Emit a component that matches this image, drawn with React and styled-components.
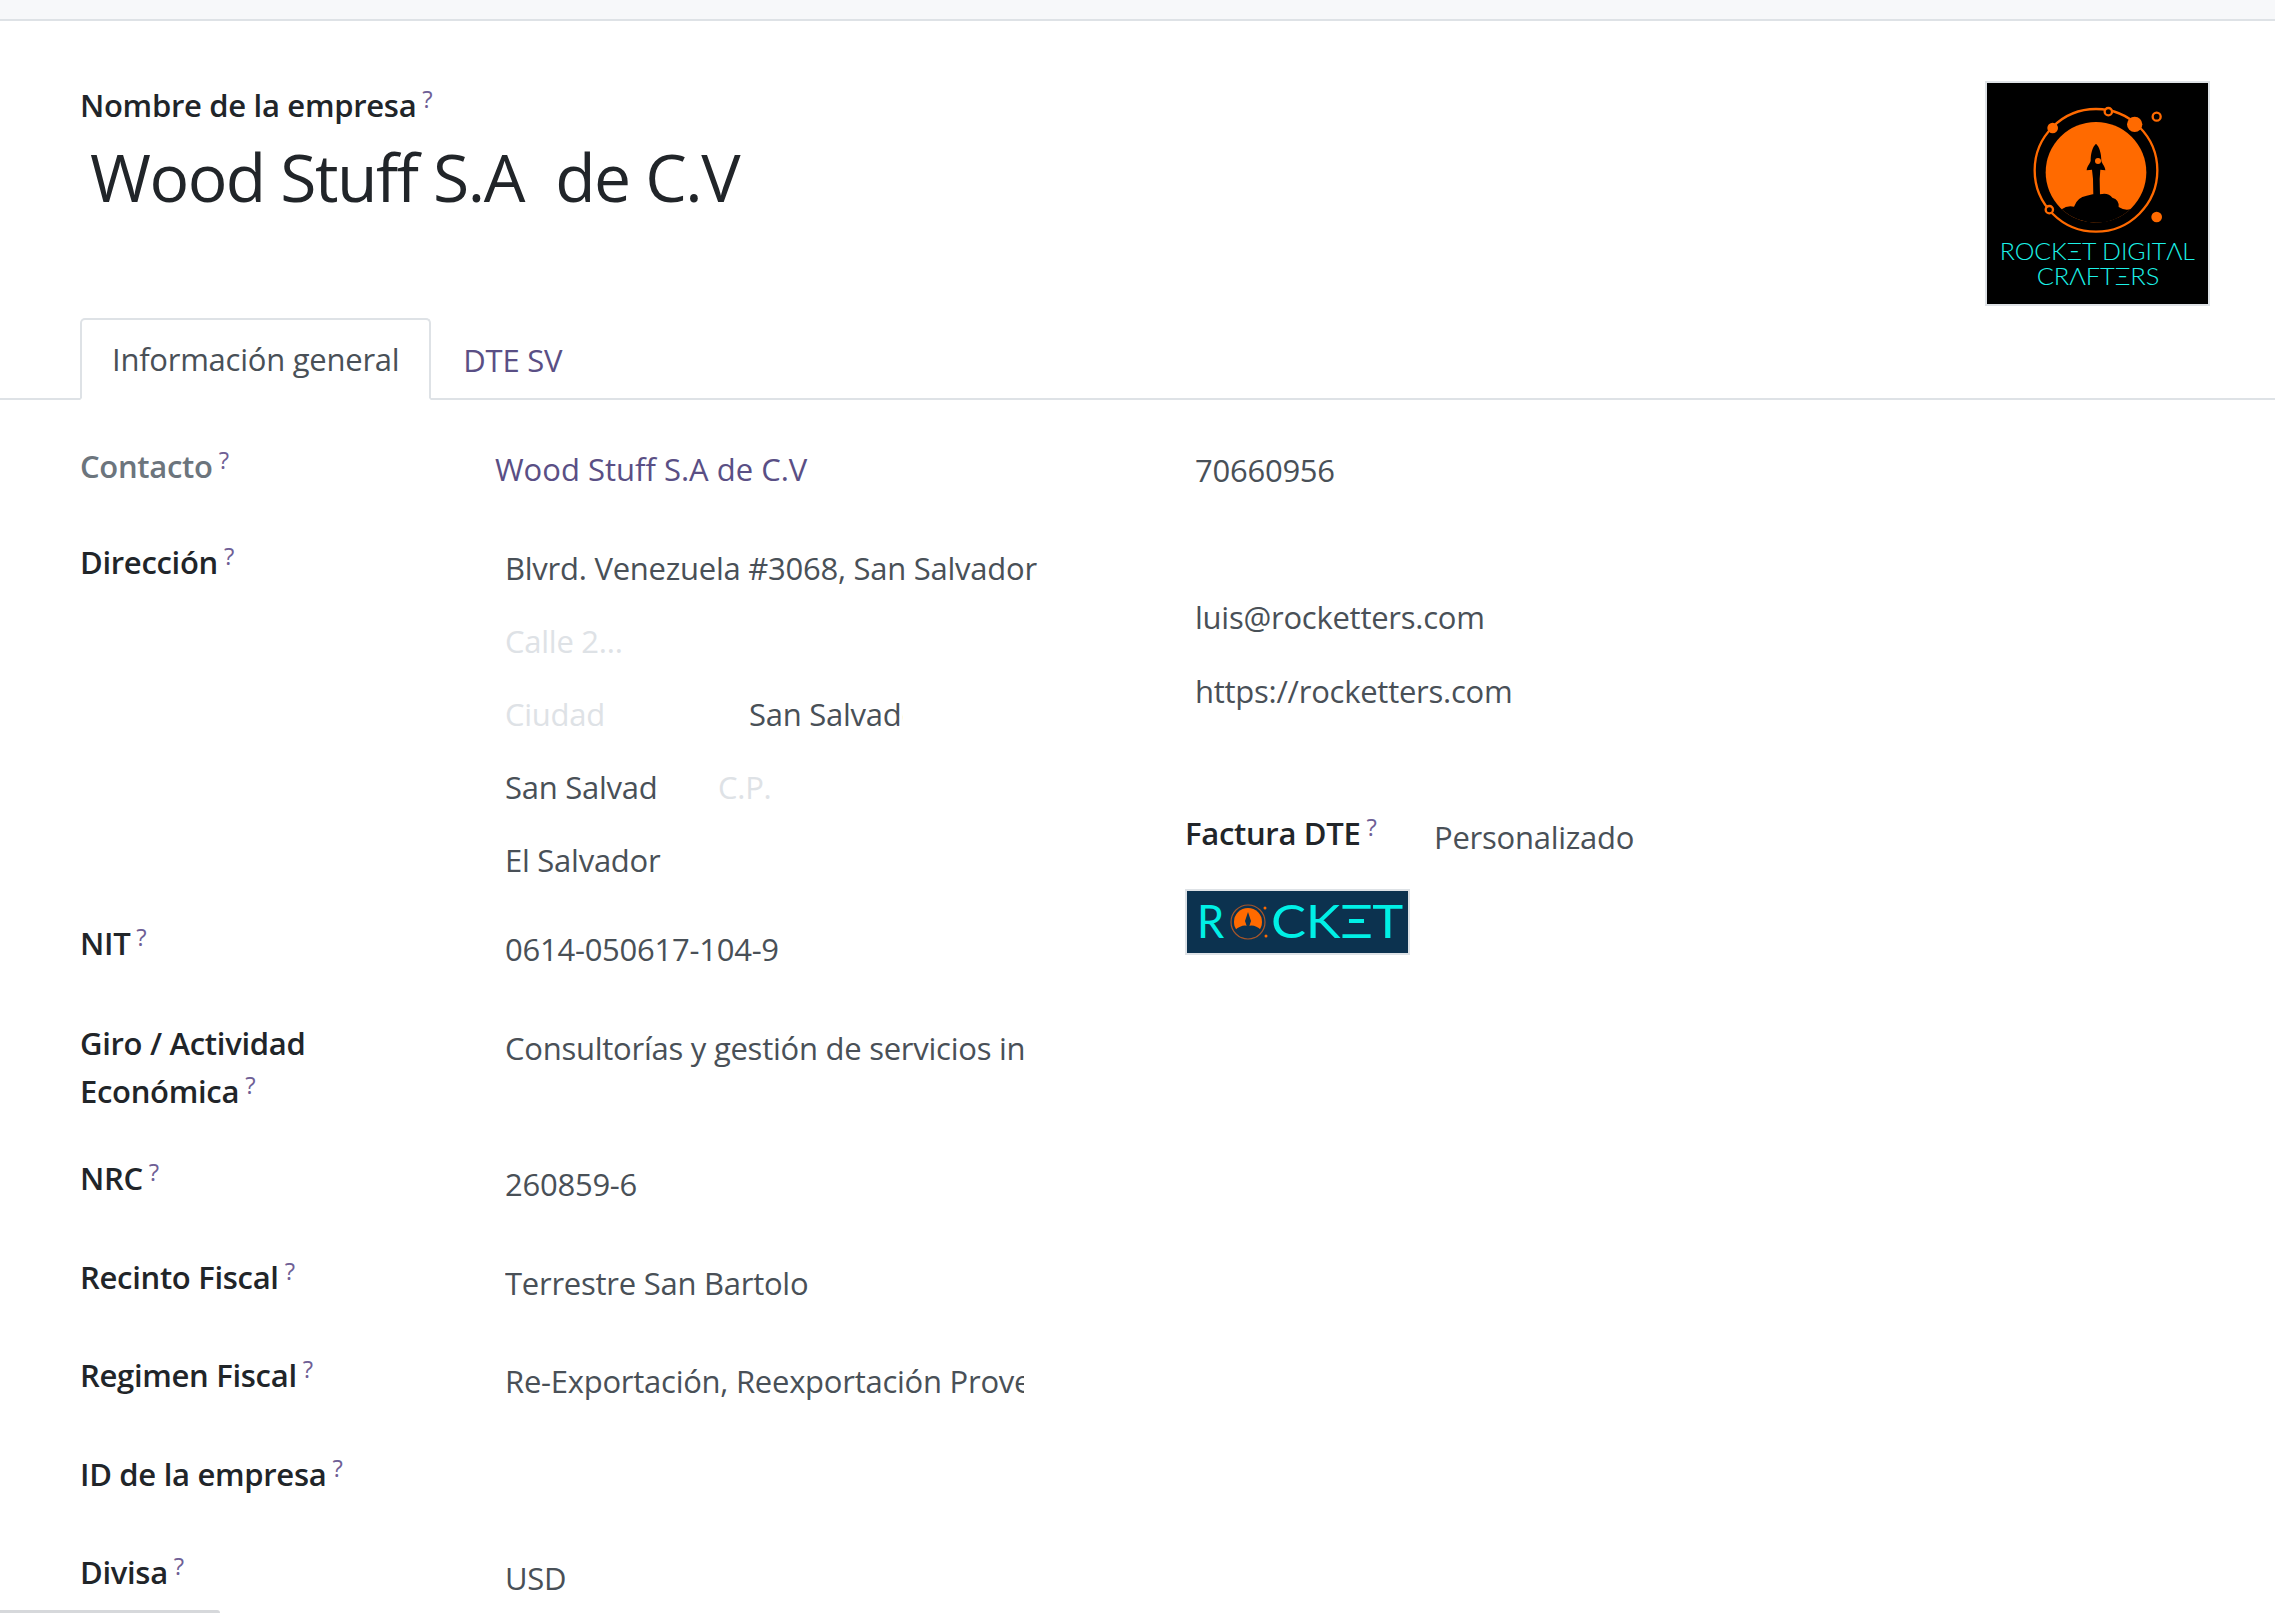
import React from "react";
import styled, { createGlobalStyle } from "styled-components";

const Global = createGlobalStyle`
  html, body { margin: 0; padding: 0; height: 100%; overflow: hidden; background: #fff; }
  body { font-family: "Open Sans", "Noto Sans", "Liberation Sans", sans-serif; font-size: 31px; letter-spacing: -0.25px; color: #212529; }
`;
const Page = styled.div`
  height: 1613px; position: relative; overflow: hidden; background: #fff;
`;
const TopBar = styled.div`
  height: 19px; background: #f7f8fa; border-bottom: 2px solid #dee2e6;
`;
const Header = styled.header`
  display: flex; justify-content: space-between; align-items: flex-start;
  padding: 60px 65px 0 80px; height: 297px; box-sizing: border-box;
`;
const TitleBlock = styled.div`
  display: flex; flex-direction: column; align-items: flex-start;
  padding-top: 1px;
`;
const CompanyLabel = styled.div`
  font-weight: 600; letter-spacing: -0.3px; line-height: 46px; color: #212529;
`;
const Title = styled.h1`
  margin: 3px 0 0 10px; font-size: 66px; font-weight: 400; line-height: 90px; color: #212529; white-space: pre; letter-spacing: -1.5px;
`;
const Framed = styled.div`
  border: 2px solid #dee2e6; box-sizing: border-box; line-height: 0; flex: none;
  svg { display: block; width: 100%; height: 100%; }
`;
const LogoFrame = styled(Framed)`
  width: 225px; height: 225px; background: #000;
`;
const BannerFrame = styled(Framed)`
  width: 225px; height: 66px; margin-top: 27px; background: #0c324f;
`;
const Tabs = styled.nav`
  display: flex; padding-left: 80px; height: 80px; border-bottom: 2px solid #dee2e6;
`;
const Tab = styled.div`
  box-sizing: border-box; height: 82px; display: flex; align-items: center; padding: 0 30px;
  border: 2px solid ${p => (p.$active ? "#dee2e6" : "transparent")};
  border-bottom: ${p => (p.$active ? "2px solid #fff" : "none")};
  border-radius: 5px 5px 0 0;
  color: ${p => (p.$active ? "#495057" : "#5a4f85")};
`;
const Columns = styled.main`
  display: grid; grid-template-columns: 1105px 1fr; padding: 43px 0 0 80px;
`;
const LeftCol = styled.section`
  display: flex; flex-direction: column; gap: 37.5px;
`;
const Row = styled.div`
  display: grid; grid-template-columns: 425px 1fr;
`;
const Label = styled.div`
  font-weight: 600; letter-spacing: -0.3px; line-height: ${p => (p.$tall ? "48px" : "46.5px")};
  padding-bottom: ${p => (p.$tall ? "3px" : "6px")};
  color: ${p => (p.$muted ? "#6c757d" : "#212529")};
  width: ${p => p.$width || "auto"};
`;
const Help = styled.sup`
  font-size: 24px; font-weight: 400; line-height: 0; vertical-align: 9px; margin-left: 6px; color: #6f5f96; letter-spacing: 0;
`;
const Value = styled.div`
  min-height: 46px; line-height: 46px; padding: 6px 0 9px; width: 519px; overflow: hidden; white-space: nowrap; color: #495057;
  margin-left: ${p => (p.$link ? "-10px" : "0")};
  ${p => p.$link && "color: #5a4f85; padding-top: 3px; letter-spacing: 0;"}
`;
const Address = styled.div`
  display: flex; flex-direction: column; gap: 27.1px; padding-top: 6px; width: 540px;
`;
const AddressLine = styled.div`
  display: flex; height: 46px; line-height: 46px; color: #495057; white-space: nowrap;
`;
const Cell = styled.span`
  display: block; overflow: hidden; flex: none; width: ${p => p.$w}px;
  color: ${p => (p.$ph ? "#dee2e6" : "#495057")};
`;
const RightCol = styled.section`
  display: flex; flex-direction: column; padding-top: 4px;
`;
const Contact = styled.div`
  display: flex; flex-direction: column; gap: 27.5px; padding-left: 10px;
`;
const ContactLine = styled.div`
  height: 46px; line-height: 46px; color: #495057;
`;
const InvoiceRow = styled.div`
  display: flex; margin-top: 96px;
`;
const InvoiceValue = styled.div`
  line-height: 46px; padding-top: 4px; color: #495057;
`;
const Scroll = styled.div`
  position: absolute; left: 0; bottom: 0; width: 220px; height: 3px; background: #d6d8db; border-radius: 0 3px 0 0;
`;

const q = <Help>?</Help>;

const RocketLogo = () => (
  <svg viewBox="111 70 663 663" aria-hidden="true">
    <rect x="111" y="70" width="663" height="663" fill="#000" />
    <circle cx="438" cy="332" r="184" fill="none" stroke="#ff6a00" strokeWidth="7" />
    <circle cx="438" cy="338" r="151" fill="#ff6a00" />
    <path d="M335 449 Q352 436 372 441 Q382 412 410 408 L428 404 L450 404 Q475 398 487 414 Q508 420 506 442 Q525 454 542 448 A152 152 0 0 1 335 449 Z" fill="#000" />
    <path d="M438 252 C427 262 422 282 422 303 C420 313 410 320 410 332 L426 330 L429 358 L430 408 L450 408 L449 358 L451 330 L466 332 C466 320 456 313 454 303 C454 282 449 262 438 252 Z" fill="#000" />
    <circle cx="444" cy="304" r="9" fill="#ff6a00" />
    <circle cx="308" cy="205" r="16" fill="#ff6a00" />
    <circle cx="554" cy="194" r="23" fill="#ff6a00" />
    <circle cx="475" cy="156" r="11" fill="#000" stroke="#ff6a00" strokeWidth="7" />
    <circle cx="620" cy="171" r="12" fill="#000" stroke="#ff6a00" strokeWidth="7" />
    <circle cx="298" cy="450" r="11" fill="#000" stroke="#ff6a00" strokeWidth="7" />
    <circle cx="620" cy="472" r="16" fill="#ff6a00" />
    <text x="442" y="602" textAnchor="middle" fontFamily="Lato, Inter, sans-serif" fontWeight="300" fontSize="70" textLength="585" lengthAdjust="spacingAndGlyphs" fill="#1cf2e8">ROCKΞT DIGITΛL</text>
    <text x="444" y="675" textAnchor="middle" fontFamily="Lato, Inter, sans-serif" fontWeight="300" fontSize="70" textLength="368" lengthAdjust="spacingAndGlyphs" fill="#1cf2e8">CRΛFTΞRS</text>
  </svg>
);

const RocketBanner = () => (
  <svg viewBox="0 0 221 62" aria-hidden="true">
    <rect width="221" height="62" fill="#0c324f" />
    <text x="10" y="47" fontFamily="Lato, Inter, sans-serif" fontWeight="400" fontSize="46" textLength="27" lengthAdjust="spacingAndGlyphs" fill="#00f0e6">R</text>
    <circle cx="61" cy="31" r="17" fill="none" stroke="#a5552a" strokeWidth="1.2" />
    <circle cx="61" cy="31" r="14" fill="#ff6a00" />
    <path d="M48 39 Q55 33 61 35 Q68 33 74 39 L68 46 L54 46 Z" fill="#0c324f" />
    <path d="M61 21 L64 30 L62 36 L60 36 L58 30 Z" fill="#0c324f" />
    <circle cx="78" cy="17" r="1.5" fill="#ff6a00" />
    <circle cx="79" cy="45" r="1.5" fill="#ff6a00" />
    <text x="84" y="47" fontFamily="Lato, Inter, sans-serif" fontWeight="400" fontSize="46" textLength="132" lengthAdjust="spacingAndGlyphs" fill="#00f0e6">CKΞT</text>
  </svg>
);

const Field = ({ label, children, muted, link }) => (
  <Row>
    <Label $muted={muted}>{label}{q}</Label>
    <Value $link={link}>{children}</Value>
  </Row>
);

export default function App() {
  return (
    <Page>
      <Global />
      <TopBar />
      <Header>
        <TitleBlock>
          <CompanyLabel>Nombre de la empresa{q}</CompanyLabel>
          <Title>Wood Stuff S.A  de C.V</Title>
        </TitleBlock>
        <LogoFrame><RocketLogo /></LogoFrame>
      </Header>
      <Tabs>
        <Tab $active>Información general</Tab>
        <Tab>DTE SV</Tab>
      </Tabs>
      <Columns>
        <LeftCol>
          <Field label="Contacto" muted link>Wood Stuff S.A de C.V</Field>
          <Row>
            <Label>Dirección{q}</Label>
            <Address>
              <AddressLine><Cell $w={534}>Blvrd. Venezuela #3068, San Salvador</Cell></AddressLine>
              <AddressLine><Cell $ph $w={400}>Calle 2...</Cell></AddressLine>
              <AddressLine><Cell $ph $w={244}>Ciudad</Cell><Cell $w={154}>San Salvador</Cell></AddressLine>
              <AddressLine><Cell $w={153}>San Salvador</Cell><Cell $w={60} /><Cell $ph $w={100}>C.P.</Cell></AddressLine>
              <AddressLine><Cell $w={400}>El Salvador</Cell></AddressLine>
            </Address>
          </Row>
          <Field label="NIT">0614-050617-104-9</Field>
          <Row>
            <Label $tall>Giro / Actividad<br />Económica{q}</Label>
            <Value>Consultorías y gestión de servicios informáticos</Value>
          </Row>
          <Field label="NRC">260859-6</Field>
          <Field label="Recinto Fiscal">Terrestre San Bartolo</Field>
          <Field label="Regimen Fiscal">Re-Exportación, Reexportación Provenientes</Field>
          <Field label="ID de la empresa" />
          <Field label="Divisa">USD</Field>
        </LeftCol>
        <RightCol>
          <Contact>
            <ContactLine>70660956</ContactLine>
            <ContactLine />
            <ContactLine>luis@rocketters.com</ContactLine>
            <ContactLine>https://rocketters.com</ContactLine>
          </Contact>
          <InvoiceRow>
            <Label $width="249px">Factura DTE{q}</Label>
            <InvoiceValue>Personalizado</InvoiceValue>
          </InvoiceRow>
          <BannerFrame><RocketBanner /></BannerFrame>
        </RightCol>
      </Columns>
      <Scroll />
    </Page>
  );
}
